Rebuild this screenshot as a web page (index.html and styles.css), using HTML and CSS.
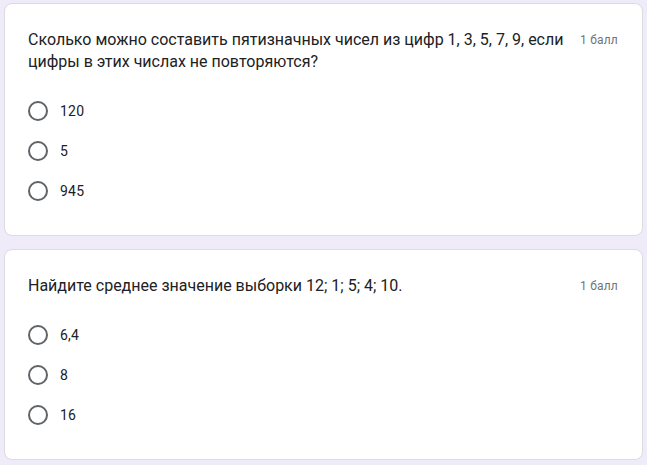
FILE: index.html
```html
<!DOCTYPE html>
<html lang="ru">
<head>
<meta charset="utf-8">
<title>Тест</title>
<link rel="stylesheet" href="styles.css">
</head>
<body>
<main class="page">
  <section class="card">
    <div class="card-head">
      <div class="question">Сколько можно составить пятизначных чисел из цифр 1, 3, 5, 7, 9, если цифры в этих числах не повторяются?</div>
      <div class="points">1 балл</div>
    </div>
    <div class="options">
      <label class="option"><span class="radio"></span><span class="option-text">120</span></label>
      <label class="option"><span class="radio"></span><span class="option-text">5</span></label>
      <label class="option"><span class="radio"></span><span class="option-text">945</span></label>
    </div>
  </section>
  <section class="card">
    <div class="card-head">
      <div class="question">Найдите среднее значение выборки 12; 1; 5; 4; 10.</div>
      <div class="points">1 балл</div>
    </div>
    <div class="options">
      <label class="option"><span class="radio"></span><span class="option-text">6,4</span></label>
      <label class="option"><span class="radio"></span><span class="option-text">8</span></label>
      <label class="option"><span class="radio"></span><span class="option-text">16</span></label>
    </div>
  </section>
</main>
</body>
</html>
```

FILE: styles.css
```css
html, body {
  margin: 0;
  padding: 0;
  background: #f0ebf8;
}

body {
  font-family: Roboto, "Noto Sans", Arial, sans-serif;
  color: #202124;
}

.page {
  display: flex;
  flex-direction: column;
  gap: 13px;
  padding: 3px 4px 0 4px;
}

.card {
  background: #ffffff;
  border: 1px solid #dadce0;
  border-radius: 8px;
  padding: 25px 24px 24px 23px;
  display: flex;
  flex-direction: column;
  gap: 18px;
}

.card-head {
  display: flex;
  align-items: flex-start;
  gap: 12px;
}

.question {
  flex: 1;
  font-size: 16px;
  line-height: 22px;
  letter-spacing: 0;
  color: #202124;
}

.points {
  flex: none;
  font-size: 12px;
  line-height: 22px;
  color: #70757a;
  letter-spacing: 0.2px;
}

.options {
  display: flex;
  flex-direction: column;
}

.option {
  display: flex;
  align-items: center;
  height: 40px;
  gap: 12px;
}

.radio {
  width: 20px;
  height: 20px;
  box-sizing: border-box;
  border: 2px solid #5f6368;
  border-radius: 50%;
  flex: none;
}

.option-text {
  font-size: 14px;
  letter-spacing: 0.2px;
  color: #202124;
}
```
